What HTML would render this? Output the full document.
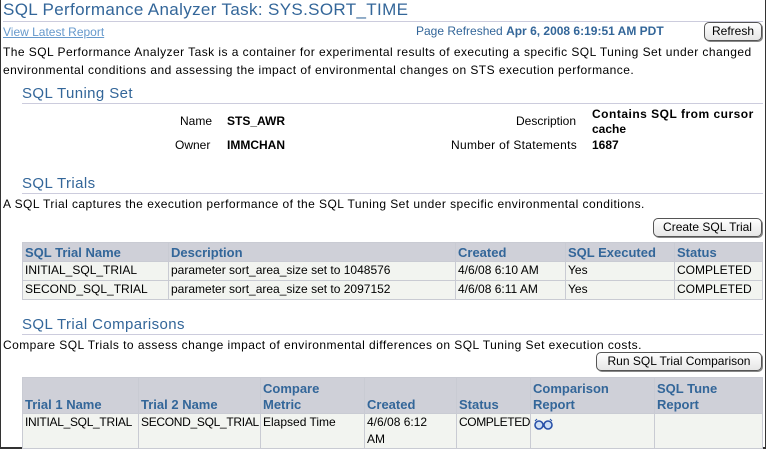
<!DOCTYPE html>
<html><head><style>
*{margin:0;padding:0;box-sizing:border-box}
body{width:766px;height:449px;background:#fff;font-family:"Liberation Sans",Arial,sans-serif;font-size:12px;color:#000;position:relative;overflow:hidden}
.frame{position:absolute;left:0;top:0;width:766px;height:449px;border-left:1px solid #333;border-right:1px solid #333;border-bottom:2px solid #333}
.a{position:absolute;white-space:nowrap}
.p{letter-spacing:0.45px}
.h1{font-size:17px;color:#336699;letter-spacing:0.35px}
.h2{font-size:15px;color:#336699;letter-spacing:0.4px}
.line{position:absolute;height:1px;background:#ccd;}
.lnk{color:#6699cc;text-decoration:underline}
.btn{position:absolute;border:1px solid #555;border-radius:5px;background:linear-gradient(#fff,#e6e6e6);font-size:12px;text-align:center;line-height:16px;box-shadow:1px 1px 0 #888}
table{position:absolute;border-collapse:collapse;font-size:12px;table-layout:fixed}
th{background:#cfd0d8;color:#336699;text-align:left;font-weight:bold;border:1px solid #c9cbd3;padding:0 2px;vertical-align:bottom;line-height:16px;font-family:"Liberation Sans Narrow","Liberation Sans",sans-serif;font-size:13px}
td{background:#f2f4f0;border:1px solid #c9cbd3;padding:0 2px;vertical-align:top;line-height:17px;overflow:hidden;white-space:nowrap}
b{font-weight:bold}
</style></head><body>
<div class="frame"></div>
<div class="a h1" style="left:3px;top:0px">SQL Performance Analyzer Task: SYS.SORT_TIME</div>
<div class="line" style="left:3px;top:21px;width:760px"></div>
<div class="a lnk" style="left:3px;top:25px">View Latest Report</div>
<div class="a" style="left:416px;top:24px;color:#336699">Page Refreshed <b>Apr 6, 2008 6:19:51 AM PDT</b></div>
<div class="btn" style="left:704px;top:22px;width:58px;height:19px">Refresh</div>
<div class="a p" style="left:3px;top:45px">The SQL Performance Analyzer Task is a container for experimental results of executing a specific SQL Tuning Set under changed</div>
<div class="a p" style="left:3px;top:63px">environmental conditions and assessing the impact of environmental changes on STS execution performance.</div>
<div class="a h2" style="left:22px;top:85px">SQL Tuning Set</div>
<div class="line" style="left:22px;top:103px;width:741px"></div>
<div class="a" style="left:180px;top:114px">Name</div>
<div class="a" style="left:227px;top:114px"><b>STS_AWR</b></div>
<div class="a" style="left:175px;top:138px">Owner</div>
<div class="a" style="left:227px;top:138px"><b>IMMCHAN</b></div>
<div class="a" style="left:516px;top:114px">Description</div>
<div class="a" style="left:592px;top:107px;letter-spacing:0.5px"><b>Contains SQL from cursor</b></div>
<div class="a" style="left:592px;top:122px"><b>cache</b></div>
<div class="a" style="left:451px;top:138px;letter-spacing:0.3px">Number of Statements</div>
<div class="a" style="left:592px;top:138px"><b>1687</b></div>
<div class="a h2" style="left:22px;top:175px">SQL Trials</div>
<div class="line" style="left:22px;top:193px;width:741px"></div>
<div class="a p" style="left:3px;top:197px">A SQL Trial captures the execution performance of the SQL Tuning Set under specific environmental conditions.</div>
<div class="btn" style="left:653px;top:218px;width:109px;height:19px">Create SQL Trial</div>
<table style="left:22px;top:242px;width:741px">
<colgroup><col style="width:146px"><col style="width:287px"><col style="width:110px"><col style="width:109px"><col></colgroup>
<tr style="height:19px"><th>SQL Trial Name</th><th>Description</th><th>Created</th><th>SQL Executed</th><th>Status</th></tr>
<tr style="height:19px"><td>INITIAL_SQL_TRIAL</td><td>parameter sort_area_size set to 1048576</td><td>4/6/08 6:10 AM</td><td>Yes</td><td>COMPLETED</td></tr>
<tr style="height:19px"><td>SECOND_SQL_TRIAL</td><td>parameter sort_area_size set to 2097152</td><td>4/6/08 6:11 AM</td><td>Yes</td><td>COMPLETED</td></tr>
</table>
<div class="a h2" style="left:22px;top:316px">SQL Trial Comparisons</div>
<div class="line" style="left:22px;top:334px;width:741px"></div>
<div class="a p" style="left:3px;top:338px">Compare SQL Trials to assess change impact of environmental differences on SQL Tuning Set execution costs.</div>
<div class="btn" style="left:596px;top:352px;width:166px;height:19px">Run SQL Trial Comparison</div>
<table style="left:22px;top:377px;width:741px">
<colgroup><col style="width:116px"><col style="width:122px"><col style="width:104px"><col style="width:92px"><col style="width:74px"><col style="width:124px"><col></colgroup>
<tr style="height:36px"><th>Trial 1 Name</th><th>Trial 2 Name</th><th>Compare<br>Metric</th><th>Created</th><th>Status</th><th>Comparison<br>Report</th><th>SQL Tune<br>Report</th></tr>
<tr style="height:34px"><td style="letter-spacing:-0.3px">INITIAL_SQL_TRIAL</td><td style="letter-spacing:-0.3px">SECOND_SQL_TRIAL</td><td>Elapsed Time</td><td>4/6/08 6:12<br>AM</td><td style="letter-spacing:-0.4px">COMPLETED</td><td><svg width="22" height="12" viewBox="0 0 22 12" style="margin-top:4px"><circle cx="6" cy="7" r="4" fill="#cfe0f5" stroke="#2850a8" stroke-width="1.6"/><circle cx="15" cy="7" r="4" fill="#cfe0f5" stroke="#2850a8" stroke-width="1.6"/><path d="M2 3 L4 1 M19 3 L17 1" stroke="#2850a8"/></svg></td><td></td></tr>
</table>
</body></html>
